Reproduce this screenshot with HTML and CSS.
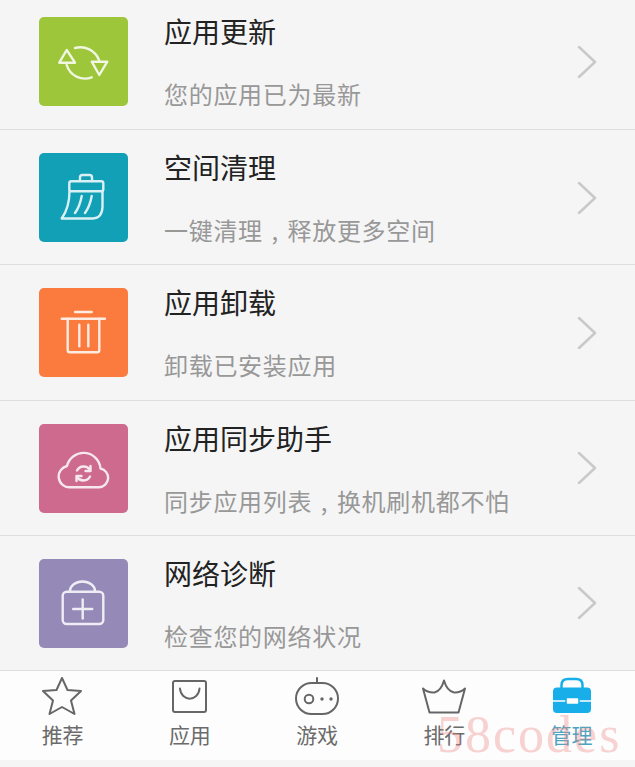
FILE: index.html
```html
<!DOCTYPE html>
<html lang="zh">
<head>
    <meta charset="utf-8">
    <title>管理</title>
    <link rel="stylesheet" href="styles.css">
</head>
<body>
    <div class="list">
        <div class="row first">
            <div class="tile green">
                <svg viewBox="0 0 89 89">
                    <path d="M36 31A20 20 0 0 1 60 43"/>
                    <path d="M27.7 48A19 19 0 0 0 52.7 60.3"/>
                    <path d="M27.7 33L20.3 45.7H36Z"/>
                    <path d="M52.7 44.7H68.3L60.3 58Z"/>
                </svg>
            </div>
            <div class="text">
                <div class="title">应用更新</div>
                <div class="sub">您的应用已为最新</div>
            </div>
            <svg class="arrow" viewBox="0 0 20 32"><path d="M2 1L18 16L2 31"/></svg>
        </div>
        <div class="row">
            <div class="tile teal">
                <svg viewBox="0 0 89 89">
                    <path d="M41 28V24.500Q41 22 43.500 22H50.500Q53 22 53 24.500V28"/>
                    <rect x="30.300" y="28.300" width="34" height="10" rx="2"/>
                    <path d="M30.500 38.300C30.500 50 28 58 22.700 65.500H54Q63 65 63.500 54V38.300"/>
                    <path d="M42.700 43Q41 53 36 60"/>
                    <path d="M52.700 43Q51 53 46 60"/>
                </svg>
            </div>
            <div class="text">
                <div class="title">空间清理</div>
                <div class="sub">一键清理<span class="comma">,</span>释放更多空间</div>
            </div>
            <svg class="arrow" viewBox="0 0 20 32"><path d="M2 1L18 16L2 31"/></svg>
        </div>
        <div class="row">
            <div class="tile orange">
                <svg viewBox="0 0 89 89">
                    <path d="M36 24H52.700"/>
                    <path d="M22.700 30.700H66"/>
                    <path d="M28.700 30.700V62.300Q28.700 64.300 30.700 64.300H58.300Q60.300 64.300 60.300 62.300V30.700"/>
                    <path d="M40.300 36.700V58.300"/>
                    <path d="M49.300 36.700V58.300"/>
                </svg>
            </div>
            <div class="text">
                <div class="title">应用卸载</div>
                <div class="sub">卸载已安装应用</div>
            </div>
            <svg class="arrow" viewBox="0 0 20 32"><path d="M2 1L18 16L2 31"/></svg>
        </div>
        <div class="row">
            <div class="tile pink">
                <svg viewBox="0 0 89 89">
                    <path d="M31 63.300H60A9.500 9.500 0 0 0 61.500 44.500A17 17 0 0 0 28 42A10.800 10.800 0 0 0 31 63.300Z"/>
                    <path d="M38 46.500A7.500 7.500 0 0 1 51 46"/>
                    <path d="M51 52.500A7.500 7.500 0 0 1 38 53"/>
                    <path d="M51.500 42V47H46.500"/>
                    <path d="M37.500 57V52H42.500"/>
                </svg>
            </div>
            <div class="text">
                <div class="title">应用同步助手</div>
                <div class="sub">同步应用列表<span class="comma">,</span>换机刷机都不怕</div>
            </div>
            <svg class="arrow" viewBox="0 0 20 32"><path d="M2 1L18 16L2 31"/></svg>
        </div>
        <div class="row">
            <div class="tile purple">
                <svg viewBox="0 0 89 89">
                    <path d="M31 32.700V32A12.500 9.500 0 0 1 56 32V32.700"/>
                    <rect x="23.700" y="32.700" width="40.600" height="32.300" rx="4"/>
                    <path d="M43.700 40.500V59.500"/>
                    <path d="M34.200 50H53.200"/>
                </svg>
            </div>
            <div class="text">
                <div class="title">网络诊断</div>
                <div class="sub">检查您的网络状况</div>
            </div>
            <svg class="arrow" viewBox="0 0 20 32"><path d="M2 1L18 16L2 31"/></svg>
        </div>
    </div>

    <div class="tabs">
        <div class="tab">
            <svg viewBox="0 0 44 40"><path d="M21 1L26.500 13L40 14L30 23.500L33.500 37L21 30L8.500 37L12 23.500L2 14L15.500 13Z"/></svg>
            <span>推荐</span>
        </div>
        <div class="tab">
            <svg viewBox="0 0 44 40">
                <rect x="5" y="4" width="33" height="31" rx="2"/>
                <path d="M12 11.500C13 25 30.500 25 31.500 11.500"/>
            </svg>
            <span>应用</span>
        </div>
        <div class="tab">
            <svg viewBox="0 0 44 40">
                <path d="M22 1V6"/>
                <rect x="1" y="6" width="42" height="31" rx="15.500"/>
                <circle cx="14" cy="22" r="4.300"/>
                <circle class="dot" cx="27" cy="22" r="1.700"/>
                <circle class="dot" cx="36" cy="22" r="1.700"/>
            </svg>
            <span>游戏</span>
        </div>
        <div class="tab">
            <svg viewBox="0 0 44 40"><path d="M1 11.500Q6 16 12.500 15.500Q19 14 22 3.500Q25 14 32 15.500Q38 16 43 11.500L36.500 35.500H7.500Z"/></svg>
            <span>排行</span>
        </div>
        <div class="tab active">
            <svg viewBox="0 0 44 40">
                <path d="M11.500 11V8Q11.500 2 18 2H26Q32.500 2 32.500 8V11" class="case-handle"/>
                <rect class="case-body" x="3" y="10.500" width="38" height="25.500" rx="4"/>
                <path class="case-line" d="M3 24H41"/>
                <rect class="case-clasp" x="16" y="20.500" width="13" height="7" rx="1.500"/>
            </svg>
            <span>管理</span>
        </div>
    </div>

    <div class="stamp">58codes</div>
</body>
</html>
```

FILE: styles.css
```css
html, body {
    margin: 0;
    height: 100%;
    background: #f5f5f5;
    overflow: hidden;
}
body {
    position: relative;
    display: flex;
    flex-direction: column;
    font-family: "Noto Sans CJK SC", "Noto Sans", sans-serif;
}

/* settings rows */
.row {
    display: flex;
    align-items: center;
    padding: 23px 39px 22.25px 39px;
    border-bottom: 1px solid #dedede;
}
.row.first {
    padding-top: 17px;
    padding-bottom: 23px;
}
.tile {
    flex: 0 0 89px;
    height: 89px;
    border-radius: 5px;
}
.tile svg {
    display: block;
    width: 89px;
    height: 89px;
    fill: none;
    stroke: #fff;
    stroke-width: 2.4;
    stroke-linecap: round;
    stroke-linejoin: round;
    opacity: 0.85;
}
.green  { background: #9dc63a; }
.teal   { background: #12a0b6; }
.orange { background: #fb7a3e; }
.pink   { background: #cd6a8e; }
.purple { background: #9589b8; }

.text {
    flex: 1;
    margin: -8.5px 0 -5.5px 36px;
    padding-top: 4px;
}
.title {
    font-size: 28px;
    line-height: 36px;
    color: #222;
}
.sub {
    margin-top: 28px;
    font-size: 24px;
    line-height: 34px;
    letter-spacing: 0.7px;
    color: #989898;
}
/* fullwidth cell with the comma sitting in its middle */
.comma {
    display: inline-block;
    width: 24.7px;
    text-align: center;
}
.arrow {
    flex: 0 0 20px;
    height: 32px;
    margin-right: -1px;
    fill: none;
    stroke: #c9c9c9;
    stroke-width: 2.5;
    stroke-linecap: round;
    stroke-linejoin: round;
}

/* bottom tab bar */
.tabs {
    display: flex;
    height: 89px;
    padding: 6px 0 0 0;
    box-sizing: border-box;
    background: #fdfdfd;
}
.tab {
    flex: 0 0 127.25px;
    display: flex;
    flex-direction: column;
    align-items: center;
    font-size: 21px;
    line-height: 28px;
    color: #6b6b6b;
}
.tab:first-child {
    margin-left: -1px;
}
.tab svg {
    display: block;
    width: 44px;
    height: 40px;
    margin-bottom: 3px;
    fill: none;
    stroke: #666;
    stroke-width: 2;
    stroke-linejoin: round;
    stroke-linecap: round;
}
.tab .dot {
    fill: #666;
    stroke: none;
}
.tab.active {
    color: #4fa3bf;
}
.tab .case-handle {
    stroke: #17aee9;
    stroke-width: 2.5;
}
.tab .case-body {
    fill: #17aee9;
    stroke: none;
}
.tab .case-line {
    stroke: #fff;
    stroke-width: 1.500;
}
.tab .case-clasp {
    fill: #fff;
    stroke: #17aee9;
    stroke-width: 1.500;
}

/* site mark lying over the tab bar */
.stamp {
    position: absolute;
    left: 437px;
    top: 700px;
    font-family: "Liberation Serif", serif;
    font-size: 52px;
    line-height: 70px;
    letter-spacing: 2px;
    color: rgba(238, 130, 130, 0.36);
}
```
